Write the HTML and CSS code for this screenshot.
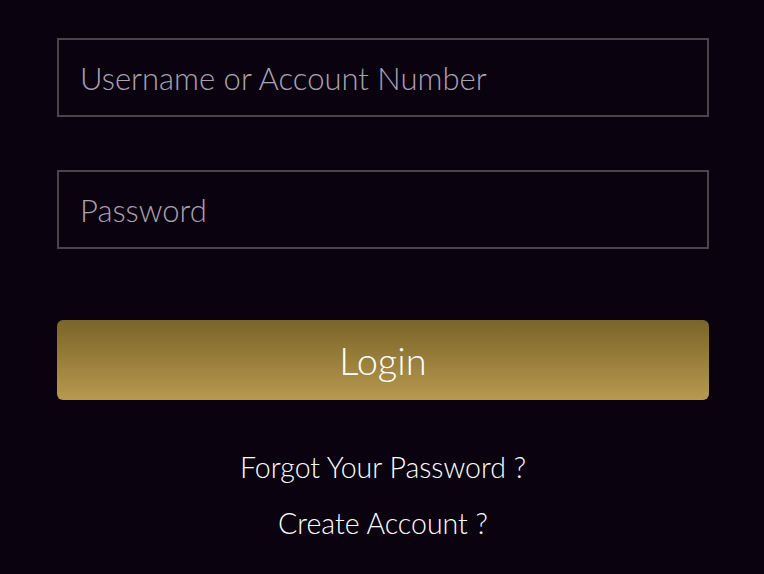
FILE: index.html
```html
<!DOCTYPE html>
<html lang="en">
<head>
    <meta charset="UTF-8">
    <meta name="viewport" content="width=device-width, initial-scale=1.0">
    <title>Login</title>
    <link rel="stylesheet" href="styles.css">
</head>
<body>
    <div class="login">
        <input class="campo" type="text" placeholder="Username or Account Number">
        <input class="campo" type="password" placeholder="Password">
        <button class="btn-login">Login</button>
        <div class="links">
            <a href="#">Forgot Your Password ?</a>
            <a href="#">Create Account ?</a>
        </div>
    </div>
</body>
</html>
```

FILE: styles.css
```css
body {
    margin: 0;
    background-color: #0a020f;
    font-family: Lato, "Noto Sans", sans-serif;
}

.login {
    display: flex;
    flex-direction: column;
    padding: 38px 55px 0 57px;
}

.campo {
    height: 79px;
    margin-bottom: 53px;
    padding: 0 21px;
    background: transparent;
    border: 2px solid #4b434d;
    box-sizing: border-box;
    font-family: inherit;
    font-size: 31px;
    font-weight: 300;
    color: #fff;
    outline: none;
}

.campo::placeholder {
    color: #aaa1b2;
}

.campo:nth-of-type(2) {
    margin-bottom: 71px;
}

.btn-login {
    height: 80px;
    border: none;
    border-radius: 6px;
    background: linear-gradient(to bottom, #7a6428, #b8994f);
    color: #fff;
    font-family: inherit;
    font-size: 38px;
    font-weight: 300;
    cursor: pointer;
}

.links {
    display: flex;
    flex-direction: column;
    align-items: center;
    gap: 22px;
    margin-top: 50px;
}

.links a {
    color: #fff;
    text-decoration: none;
    font-size: 28.5px;
    font-weight: 300;
    line-height: 34px;
}
```
